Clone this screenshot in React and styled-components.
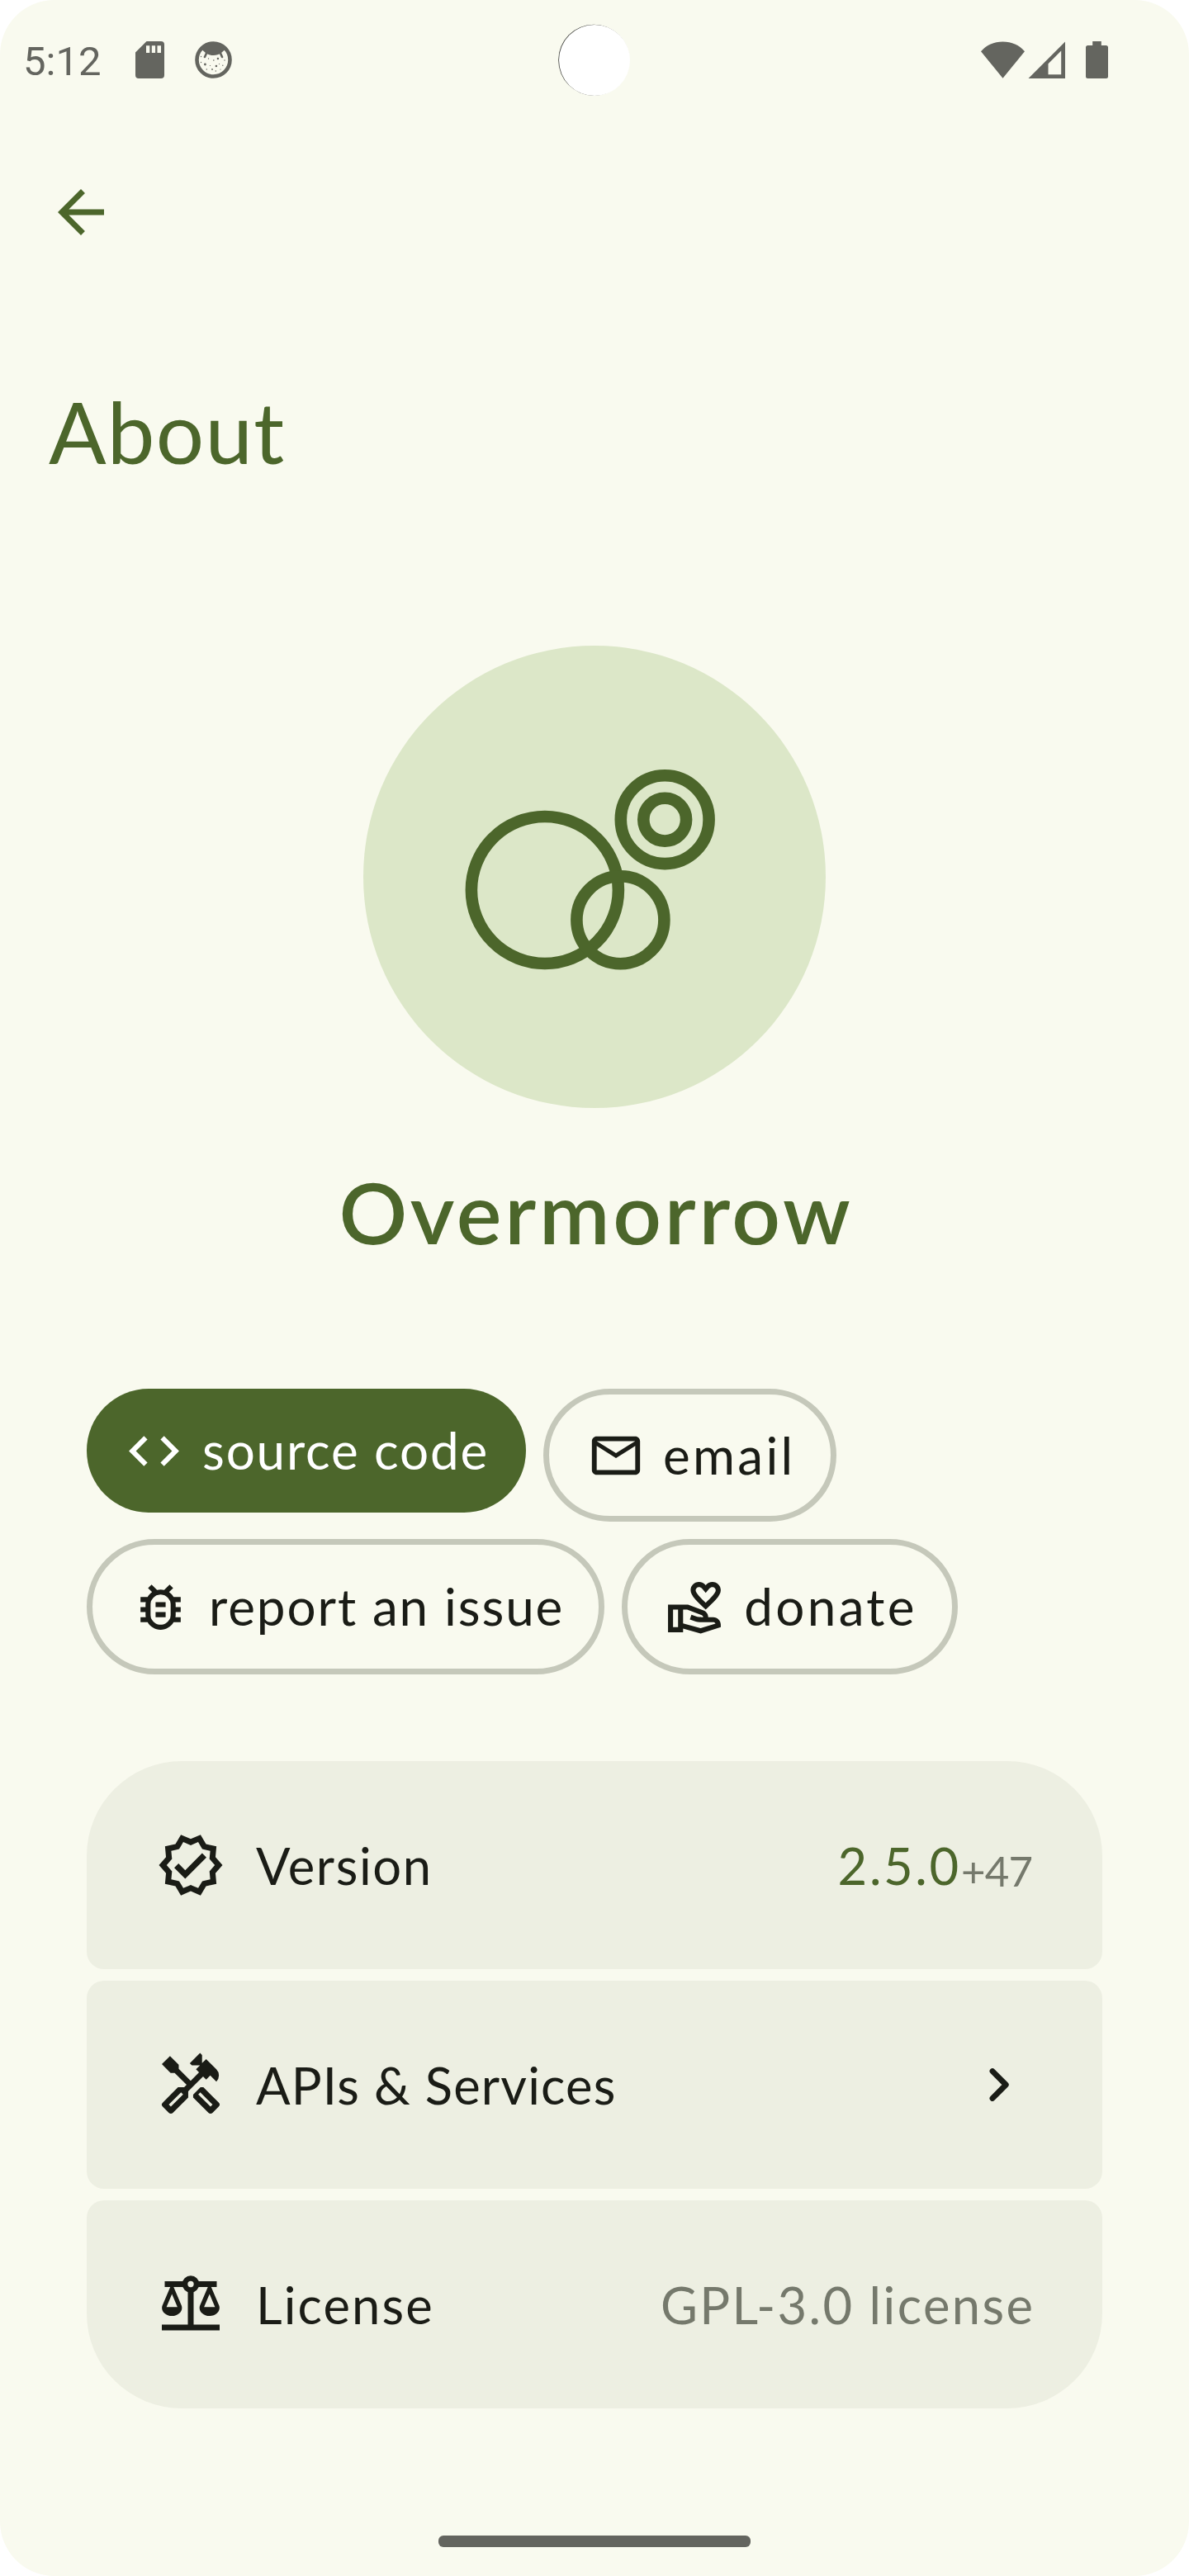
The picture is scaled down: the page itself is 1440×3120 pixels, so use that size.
import React from "react";
import styled, { createGlobalStyle } from "styled-components";
import {
  MdArrowBack,
  MdCode,
  MdOutlineMailOutline,
  MdOutlineBugReport,
  MdOutlineVolunteerActivism,
  MdOutlineVerified,
  MdOutlineHandyman,
} from "react-icons/md";

const color = {
  surface: "#f9faef",
  container: "#edefe2",
  primary: "#4c662b",
  badge: "#dce7c8",
  text: "#1a1c16",
  muted: "#75796c",
  outline: "#c5c8ba",
  system: "#64655f",
};

const GlobalStyle = createGlobalStyle`
  *, *::before, *::after { box-sizing: border-box; }
  body {
    margin: 0;
    background: #ffffff;
    font-family: Lato, "Open Sans", sans-serif;
  }
`;

const Screen = styled.main`
  position: relative;
  display: flex;
  flex-direction: column;
  width: 1440px;
  height: 3120px;
  padding-bottom: 35px;
  overflow: hidden;
  border-radius: 66px;
  background: ${color.surface};
  color: ${color.text};
`;

const StatusBar = styled.div`
  display: flex;
  align-items: center;
  justify-content: space-between;
  height: 145px;
  padding: 0 98px 0 28px;
  color: ${color.system};
`;

const StatusGroup = styled.div`
  display: flex;
  align-items: center;
  gap: ${(p) => p.$gap || 0}px;
`;

const Clock = styled.span`
  width: 99px;
  margin-top: 4px;
  font: 400 49px/57px Roboto, sans-serif;
`;

const Camera = styled.div`
  position: absolute;
  top: 30px;
  left: 677px;
  width: 86px;
  height: 86px;
  border-radius: 50%;
  background: #ffffff;
  box-shadow: -0.8px -0.3px 0 #3c3d38;
`;

const AppBar = styled.header`
  padding: 70px 56px 0;
  height: 154px;
  font-size: 84px;
  line-height: 0;
  color: ${color.primary};
`;

const BackButton = styled.button`
  display: block;
  width: 84px;
  height: 84px;
  padding: 0;
  border: 0;
  background: none;
  color: inherit;
  font-size: 84px;
  line-height: 0;
`;

const Title = styled.h1`
  margin: 161px 0 0 59px;
  font-size: 103px;
  font-weight: 400;
  line-height: 124px;
  letter-spacing: 1.3px;
  color: ${color.primary};
`;

const Hero = styled.section`
  display: flex;
  flex-direction: column;
  align-items: center;
  gap: 63px;
  margin-top: 198px;
  color: ${color.primary};
`;

const Badge = styled.div`
  display: flex;
  width: 560px;
  height: 560px;
  border-radius: 50%;
  background: ${color.badge};
`;

const AppName = styled.h2`
  margin: 0;
  padding-left: 4px;
  font-size: 103px;
  font-weight: 600;
  line-height: 124px;
  letter-spacing: 3.7px;
`;

const Chips = styled.nav`
  display: flex;
  flex-wrap: wrap;
  align-items: flex-start;
  gap: 21px;
  margin: 153px 105px 0;
`;

const Chip = styled.button`
  display: flex;
  align-items: center;
  gap: 22px;
  height: ${(p) => p.$height}px;
  padding: ${(p) => (p.$filled ? "0 45px" : "0 42px 0 46px")};
  border: ${(p) => (p.$filled ? "0" : `7px solid ${color.outline}`)};
  border-radius: 82px;
  background: ${(p) => (p.$filled ? color.primary : "transparent")};
  color: ${(p) => (p.$filled ? "#ffffff" : color.text)};
  font-family: inherit;
  font-size: 62px;

  svg {
    flex: none;
    width: ${(p) => p.$icon || 73}px;
    height: ${(p) => p.$icon || 73}px;
  }
`;

const ChipLabel = styled.span`
  padding-bottom: 2px;
  line-height: 74px;
  letter-spacing: ${(p) => p.$track}px;
  white-space: nowrap;
`;

const List = styled.section`
  display: flex;
  flex-direction: column;
  gap: 14px;
  margin: 105px 105px 0;
`;

const Row = styled.div`
  display: flex;
  align-items: center;
  height: 252px;
  padding: 0 84px;
  border-radius: 21px;
  background: ${color.container};

  &:first-child {
    border-top-left-radius: 115px;
    border-top-right-radius: 115px;
  }

  &:last-child {
    border-bottom-left-radius: 115px;
    border-bottom-right-radius: 115px;
  }

  svg {
    flex: none;
    width: 84px;
    height: 84px;
  }
`;

const RowText = styled.span`
  padding-bottom: 1px;
  font-size: 61.5px;
  line-height: 74px;
  letter-spacing: ${(p) => p.$track}px;
  margin-right: ${(p) => -p.$track}px;
  color: ${(p) => p.$color || "inherit"};
  white-space: nowrap;
`;

const RowLabel = styled(RowText)`
  flex: 1;
  margin-left: 37px;
`;

const Build = styled.span`
  margin-left: 3px;
  padding-top: 12px;
  font-size: 51px;
  line-height: 61px;
  letter-spacing: -0.9px;
  margin-right: 0.9px;
  color: ${color.muted};
`;

const HomeHandle = styled.div`
  width: 378px;
  height: 14px;
  margin: auto auto 0;
  border-radius: 6px;
  background: ${color.system};
`;

const SdCard = () => (
  <svg width="35" height="45" viewBox="0 0 35 45" fill="currentColor">
    <path
      fillRule="evenodd"
      d="M13.5 0H31a4 4 0 0 1 4 4v37a4 4 0 0 1-4 4H4a4 4 0 0 1-4-4V13.5zM13 5.3v8.7h4.3V5.3zM19.8 5.3v8.7h4.3V5.3zM26.5 5.3v8.7H31V5.3z"
    />
  </svg>
);

const freckles = [
  [7.5, 18.5, 0.7], [7.5, 25.5, 0.7], [12.4, 28, 1.4], [16.5, 21, 0.7], [18.5, 29.5, 0.6],
  [22.8, 23, 0.8], [27.9, 21, 1.2], [25.9, 30, 1.3], [29.5, 27.5, 0.6], [33.8, 29.3, 0.7],
  [36, 23, 0.7], [14.3, 34, 0.7], [21, 34, 0.9], [25.3, 36, 0.7], [31, 34, 0.6],
];

const Face = () => (
  <svg width="45" height="45" viewBox="0 0 45 45" fill="currentColor">
    <circle cx="22.5" cy="22.5" r="20" fill="none" stroke="currentColor" strokeWidth="4.6" />
    <path d="M5 12C9 5 15 2 22.500 2S36 5 40 12L36 10.500L31.500 14.500C29 16 26 17 22.500 17S16 16 13.500 14.500L9 10.500z" />
    <path d="M14 14.500L12 19M31 14.500L33 19" stroke="currentColor" strokeWidth="2.6" strokeLinecap="round" />
    {freckles.map(([x, y, r]) => (
      <circle key={`${x}-${y}`} cx={x} cy={y} r={r} />
    ))}
  </svg>
);

const Wifi = () => (
  <svg width="53" height="45" viewBox="0 0 53 45" fill="currentColor">
    <path d="M0 12.200C7 4.500 15.500 0.500 26.500 0.500S46 4.500 53 12.200L26.500 44.700z" />
  </svg>
);

const Signal = () => (
  <svg width="45" height="45" viewBox="0 0 45 45" fill="currentColor">
    <path fillRule="evenodd" d="M45 0.500V45H0.500zM40.200 11.500L24.500 27.200V40.200H40.200z" />
  </svg>
);

const Battery = () => (
  <svg width="27" height="45" viewBox="0 0 27 45" fill="currentColor">
    <path d="M8.200 0h10.600v5H24.500A2.500 2.500 0 0 1 27 7.500V42.500A2.500 2.500 0 0 1 24.500 45H2.500A2.500 2.500 0 0 1 0 42.500V7.500A2.500 2.500 0 0 1 2.500 5H8.200z" />
  </svg>
);

const Logo = () => (
  <svg width="560" height="560" viewBox="0 0 560 560" fill="none" stroke="currentColor" strokeWidth="14.6">
    <circle cx="219.900" cy="296" r="89" />
    <circle cx="311.400" cy="332.200" r="53" />
    <circle cx="365.200" cy="210.700" r="53.400" />
    <circle cx="365.200" cy="210.700" r="25.900" />
  </svg>
);

const Scales = () => (
  <svg viewBox="0 0 24 24" fill="currentColor">
    <circle cx="12" cy="5" r="2" fill="none" stroke="currentColor" strokeWidth="1.9" />
    <path d="M3 4h6.500v2H3zM14.500 4H21v2h-6.500zM11 7.500h2V19h-2zM2 19h20v2H2z" />
    {[5.5, 18.5].map((x) => (
      <path
        key={x}
        fillRule="evenodd"
        transform={`translate(${x} 0)`}
        d="M-.55 5.900h1.100L3.350 12.500C3.900 14.200 2.300 16 0 16S-3.900 14.200-3.350 12.500zM0 8.400L-1.900 12.900H1.900z"
      />
    ))}
  </svg>
);

const Chevron = () => (
  <svg
    viewBox="0 0 24 24"
    fill="none"
    stroke="currentColor"
    strokeWidth="1.95"
    strokeLinecap="round"
    strokeLinejoin="round"
  >
    <path d="M10 7.300L14.650 12L10 16.700" />
  </svg>
);

export default function App() {
  return (
    <Screen>
      <GlobalStyle />
      <StatusBar>
        <StatusGroup $gap={37}>
          <Clock>5:12</Clock>
          <SdCard />
          <Face />
        </StatusGroup>
        <StatusGroup $gap={25}>
          <StatusGroup $gap={4}>
            <Wifi />
            <Signal />
          </StatusGroup>
          <Battery />
        </StatusGroup>
      </StatusBar>
      <Camera />

      <AppBar>
        <BackButton aria-label="Back">
          <MdArrowBack />
        </BackButton>
      </AppBar>

      <Title>About</Title>

      <Hero>
        <Badge>
          <Logo />
        </Badge>
        <AppName>Overmorrow</AppName>
      </Hero>

      <Chips>
        <Chip $filled $height={150}>
          <MdCode />
          <ChipLabel $track={1.8}>source code</ChipLabel>
        </Chip>
        <Chip $height={161} $icon={70}>
          <MdOutlineMailOutline />
          <ChipLabel $track={3.3}>email</ChipLabel>
        </Chip>
        <Chip $height={164}>
          <MdOutlineBugReport />
          <ChipLabel $track={1.9}>report an issue</ChipLabel>
        </Chip>
        <Chip $height={164}>
          <MdOutlineVolunteerActivism />
          <ChipLabel $track={3.3}>donate</ChipLabel>
        </Chip>
      </Chips>

      <List>
        <Row>
          <MdOutlineVerified />
          <RowLabel $track={1.65}>Version</RowLabel>
          <RowText $track={2.6} $color={color.primary}>2.5.0</RowText>
          <Build>+47</Build>
        </Row>
        <Row>
          <MdOutlineHandyman />
          <RowLabel $track={1.15}>APIs &amp; Services</RowLabel>
          <Chevron />
        </Row>
        <Row>
          <Scales />
          <RowLabel $track={2.1}>License</RowLabel>
          <RowText $track={2.4} $color={color.muted}>GPL-3.0 license</RowText>
        </Row>
      </List>

      <HomeHandle />
    </Screen>
  );
}
